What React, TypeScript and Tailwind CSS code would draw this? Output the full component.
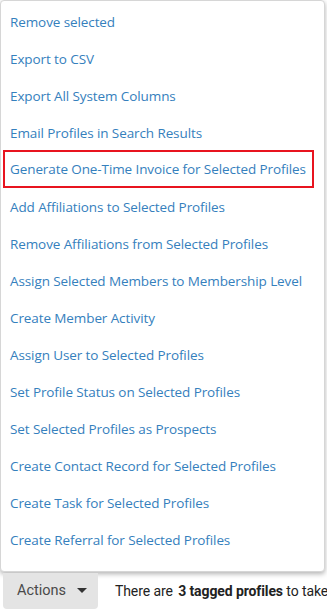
const items = [
  'Remove selected',
  'Export to CSV',
  'Export All System Columns',
  'Email Profiles in Search Results',
  'Generate One-Time Invoice for Selected Profiles',
  'Add Affiliations to Selected Profiles',
  'Remove Affiliations from Selected Profiles',
  'Assign Selected Members to Membership Level',
  'Create Member Activity',
  'Assign User to Selected Profiles',
  'Set Profile Status on Selected Profiles',
  'Set Selected Profiles as Prospects',
  'Create Contact Record for Selected Profiles',
  'Create Task for Selected Profiles',
  'Create Referral for Selected Profiles',
];

export default function App() {
  return (
    <div className="w-[327px] h-[611px] overflow-hidden bg-white flex flex-col font-['Open_Sans',sans-serif]">
      {/* Actions dropdown menu */}
      <div className="w-[325px] h-[572px] shrink-0 bg-white border border-[#d6d6d6] rounded-[4px] shadow-[0_2px_5px_rgba(0,0,0,0.3)] pt-[3px] flex flex-col">
        {items.map((label, i) =>
          i === 4 ? (
            <div
              key={label}
              className="ml-[2px] w-fit h-[38px] mt-[-2px] mb-[1px] border-2 border-[#e8141f] pl-[5px] pr-[6px] flex items-center text-[13.5px] text-[#3580bd] tracking-[-0.1px] whitespace-nowrap"
            >
              {label}
            </div>
          ) : (
            <div
              key={label}
              className="h-[37px] pl-[9px] flex items-center text-[13.5px] text-[#3580bd] tracking-[-0.1px] whitespace-nowrap"
            >
              {label}
            </div>
          )
        )}
      </div>

      {/* Bottom action bar */}
      <div className="flex items-center h-[39px] font-['Roboto',sans-serif] whitespace-nowrap overflow-hidden">
        <div className="shrink-0 ml-[3px] mt-[-2px] w-[95px] h-[36px] bg-[#e4e4e4] rounded-b-[4px] flex items-center pl-[14px] text-[14.5px] text-[#4a4a4a]">
          Actions
          <svg width="10" height="6" viewBox="0 0 10 6" className="ml-[11px]">
            <path d="M0 0h10L5 5z" fill="#333" />
          </svg>
        </div>
        <div className="shrink-0 ml-[17px] text-[14px] tracking-[-0.1px] text-[#222]">
          There are <span className="font-bold ml-[2px]">3 tagged profiles</span> to take action on
        </div>
      </div>
    </div>
  );
}
